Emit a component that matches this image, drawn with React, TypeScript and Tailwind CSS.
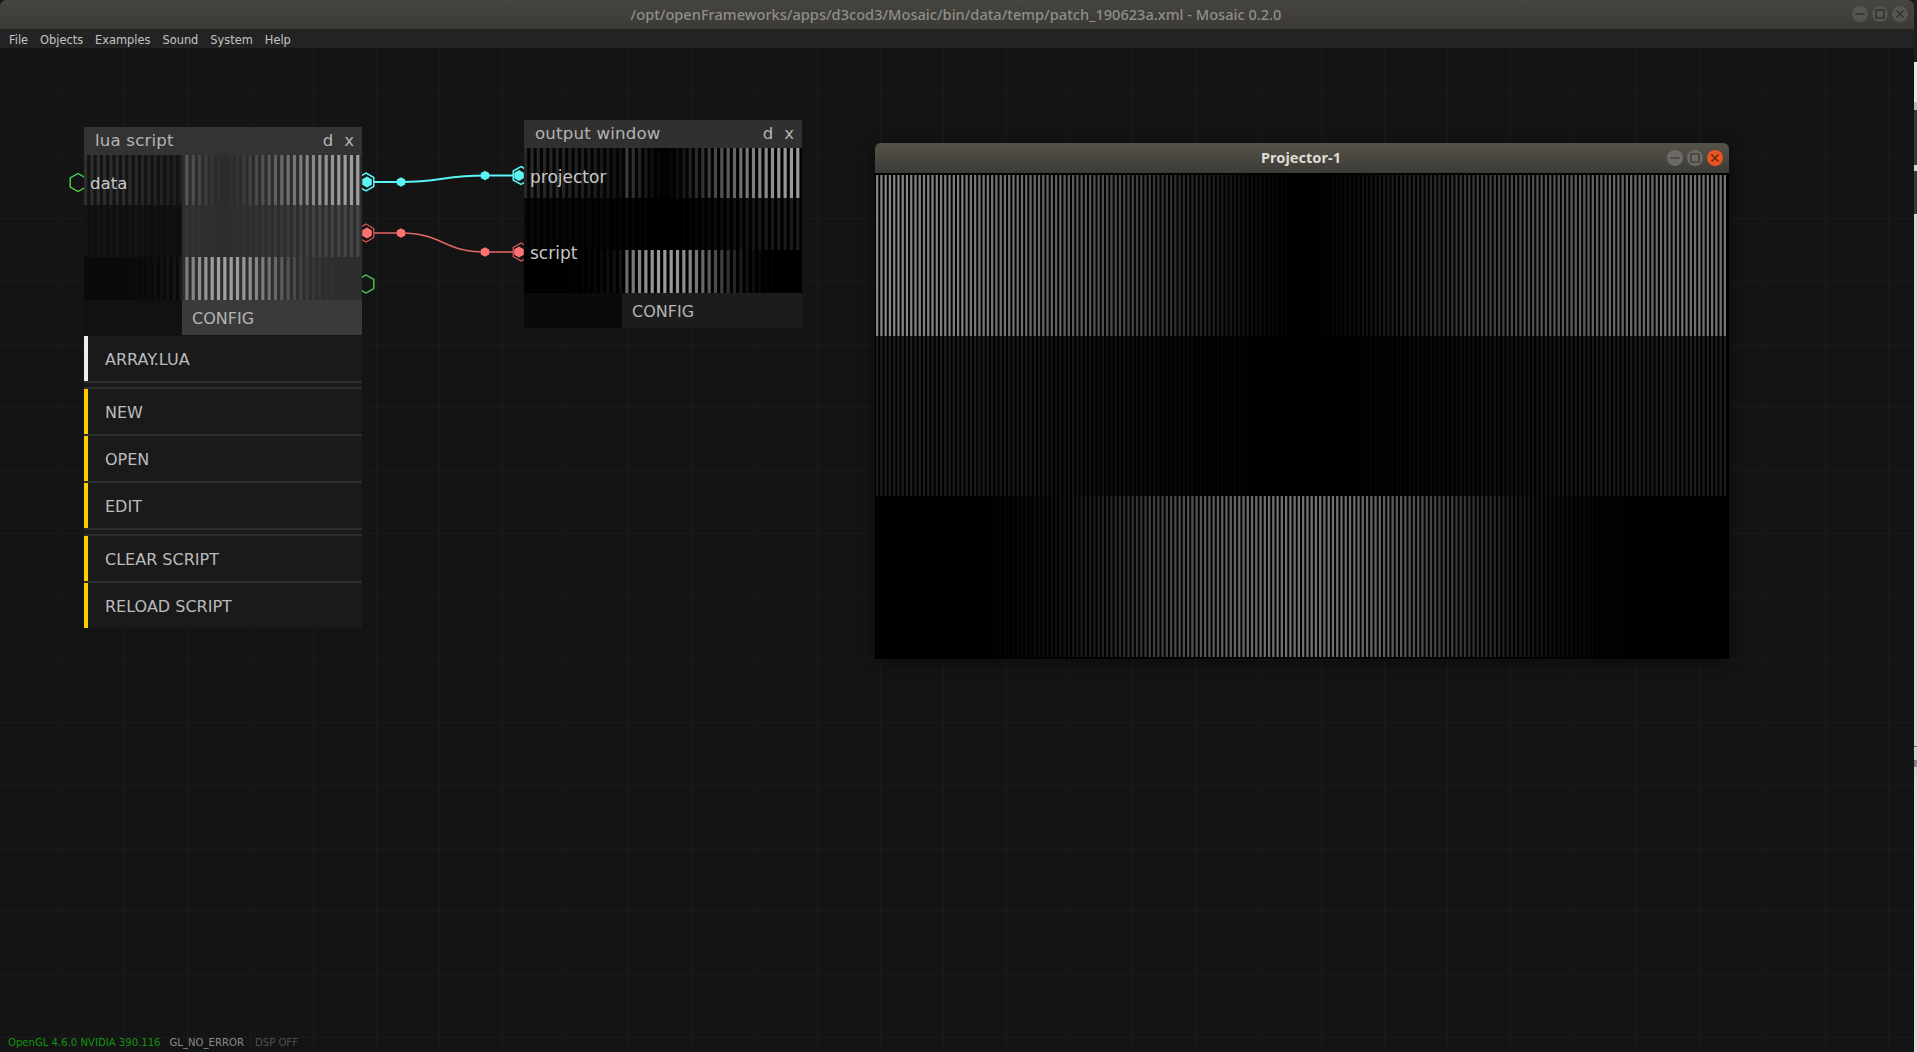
import React from 'react'

const VERDANA = "font-['DejaVu_Sans',sans-serif]"

const clamp = (v: number) => Math.max(0, Math.min(255, Math.round(v)))
const grey = (v: number) => {
  const c = clamp(v)
  return `rgb(${c},${c},${c})`
}

// brightness of the three bands across the width (t = 0..1)
const envelopes = [
  (t: number) => (t < 0.5 ? 0.72 : 0.62) * Math.pow(Math.abs(Math.cos(Math.PI * t)), 1.3),
  (t: number) => 0.22 * Math.pow(Math.abs(Math.cos(Math.PI * t)), 1.5),
  (t: number) => 0.62 * Math.pow(Math.sin(Math.PI * t), 4),
]

type StripesProps = {
  width: number
  rows: number[]
  period: number
  barWidth: number
  split?: number
  bgs?: [number, number][]
  gains?: [number, number]
  rowGains?: number[]
}

function Stripes({ width, rows, period, barWidth, split = 0, bgs, gains = [1, 1], rowGains = [1, 1, 1] }: StripesProps) {
  const total = rows.reduce((a, b) => a + b, 0)
  const rects: React.ReactNode[] = []
  let y = 0
  rows.forEach((h, r) => {
    const [bgL, bgR] = bgs ? bgs[r] : [0, 0]
    if (split > 0) rects.push(<rect key={`l${r}`} x={0} y={y} width={split} height={h} fill={grey(bgL)} />)
    rects.push(<rect key={`r${r}`} x={split} y={y} width={width - split} height={h} fill={grey(bgR)} />)
    for (let i = 0; i * period < width; i++) {
      const x = i * period
      const t = x / width
      const left = x < split
      const bg = left ? bgL : bgR
      const gain = (left ? gains[0] : gains[1]) * rowGains[r]
      const v = bg + (255 - bg) * envelopes[r](t) * gain
      const w = left ? Math.min(barWidth, split - x) : barWidth
      if (v - bg > 1) rects.push(<rect key={`b${r}-${i}`} x={x} y={y} width={w} height={h} fill={grey(v)} />)
    }
    y += h
  })
  return (
    <svg width={width} height={total} viewBox={`0 0 ${width} ${total}`} className="block">
      {rects}
    </svg>
  )
}

const hexPoints = (cx: number, cy: number, r: number) =>
  [0, 1, 2, 3, 4, 5]
    .map((i) => {
      const a = (Math.PI / 3) * i - Math.PI / 2
      return `${cx + r * Math.cos(a)},${cy + r * Math.sin(a)}`
    })
    .join(' ')

function Wires() {
  const cyan = '#5cf4f4'
  const red = '#ff7272'
  return (
    <svg className="absolute left-0 top-0 w-[600px] h-[300px]" viewBox="0 48 600 300">
      <polygon points={hexPoints(78, 182.5, 9)} fill="none" stroke="#4fd24f" strokeWidth="1.4" />
      <polygon points={hexPoints(366, 284, 9)} fill="none" stroke="#4fd24f" strokeWidth="1.4" />

      <path d="M367 182 L401 182 C 440 182, 445 175.5, 485 175.5 L519 175.5" fill="none" stroke={cyan} strokeWidth="2" />
      <polygon points={hexPoints(366, 182, 9)} fill="#141414" stroke={cyan} strokeWidth="1.5" />
      <polygon points={hexPoints(367, 182, 5.5)} fill={cyan} />
      <polygon points={hexPoints(401, 182, 4.8)} fill={cyan} />
      <polygon points={hexPoints(485, 175.5, 4.8)} fill={cyan} />
      <polygon points={hexPoints(521, 175.5, 9)} fill="#141414" stroke={cyan} strokeWidth="1.5" />
      <polygon points={hexPoints(519, 175.5, 5.5)} fill={cyan} />

      <path d="M367 233 L401 233 C 443 233, 443 252, 485 252 L519 252" fill="none" stroke="#e56666" strokeWidth="1.4" />
      <polygon points={hexPoints(366, 233, 9)} fill="#141414" stroke="#d85c5c" strokeWidth="1.2" />
      <polygon points={hexPoints(367, 233, 5.5)} fill={red} />
      <polygon points={hexPoints(401, 233, 4.8)} fill={red} />
      <polygon points={hexPoints(485, 252, 4.8)} fill={red} />
      <polygon points={hexPoints(521, 252, 9)} fill="#141414" stroke="#d85c5c" strokeWidth="1.2" />
      <polygon points={hexPoints(519, 252, 5.5)} fill={red} />
    </svg>
  )
}

function NodeHeader({ title, className }: { title: string; className: string }) {
  return (
    <div className={`h-[28px] flex items-center justify-between pl-[11px] pr-[8px] text-[16.6px] text-[#b4b4b4] ${className}`}>
      <span className="tracking-[0.2px]">{title}</span>
      <span className="flex gap-[11px]">
        <span>d</span>
        <span>x</span>
      </span>
    </div>
  )
}

function PanelRow({ label, bar, last }: { label: string; bar: string; last?: boolean }) {
  return (
    <div className={`flex ${last ? 'h-[45px]' : 'h-[47px] border-b-2 border-[#2d2d2d]'}`}>
      <div className={`w-[4px] ${bar}`} />
      <div className="flex-1 flex items-center pl-[17px] pt-[3px] text-[16px] text-[#bcbcbc]">{label}</div>
    </div>
  )
}

function Gap() {
  return <div className="h-[4px] bg-[#1a1a1a]" />
}

function Sep() {
  return <div className="h-[2px] bg-[#2d2d2d]" />
}

function LuaNode() {
  return (
    <div className={`absolute left-[84px] top-[79px] w-[278px] ${VERDANA}`}>
      <NodeHeader title="lua script" className="bg-[#333333]" />
      <div className="relative">
        <Stripes
          width={278}
          rows={[50, 52, 43]}
          period={6.33}
          barWidth={3.2}
          split={98}
          bgs={[
            [19, 44],
            [15, 46],
            [10, 46],
          ]}
          gains={[0.16, 0.88]}
          rowGains={[1, 0.6, 1]}
        />
        <span className="absolute left-[6px] top-[19px] leading-[20px] text-[16.6px] text-[#c8c8c8]">data</span>
      </div>
      <div className="h-[35px] flex">
        <div className="w-[98px] bg-[#111111]" />
        <div className="flex-1 flex items-center pl-[10px] pt-[2px] bg-[#3a3a3a] text-[16px] text-[#b4b4b4]">CONFIG</div>
      </div>
      <div className="mt-[1px] bg-[#1a1a1a]">
        <PanelRow label="ARRAY.LUA" bar="bg-[#eeeeee]" />
        <Gap />
        <Sep />
        <PanelRow label="NEW" bar="bg-[#ffcc00]" />
        <PanelRow label="OPEN" bar="bg-[#ffcc00]" />
        <PanelRow label="EDIT" bar="bg-[#ffcc00]" />
        <Gap />
        <Sep />
        <PanelRow label="CLEAR SCRIPT" bar="bg-[#ffcc00]" />
        <PanelRow label="RELOAD SCRIPT" bar="bg-[#ffcc00]" last />
      </div>
    </div>
  )
}

function OutputNode() {
  return (
    <div className={`absolute left-[524px] top-[72px] w-[278px] ${VERDANA}`}>
      <NodeHeader title="output window" className="bg-[#303030]" />
      <div className="relative">
        <Stripes
          width={278}
          rows={[50, 52, 43]}
          period={6.33}
          barWidth={3.2}
          split={98}
          bgs={[
            [4, 2],
            [2, 0],
            [0, 0],
          ]}
          gains={[0.2, 0.98]}
          rowGains={[1, 0.5, 1]}
        />
        <span className="absolute left-[6px] top-[19px] leading-[20px] text-[17px] text-[#c8c8c8]">projector</span>
        <span className="absolute left-[6px] top-[95px] leading-[20px] text-[17px] text-[#c8c8c8]">script</span>
      </div>
      <div className="h-[35px] flex">
        <div className="w-[98px] bg-[#0a0a0a]" />
        <div className="flex-1 flex items-center pl-[10px] pt-[2px] bg-[#1c1c1c] text-[16px] text-[#b4b4b4]">CONFIG</div>
      </div>
    </div>
  )
}

function WinButton({ kind, className, stroke }: { kind: 'min' | 'max' | 'close'; className: string; stroke: string }) {
  return (
    <div className={`w-[16px] h-[16px] rounded-full flex items-center justify-center ${className}`}>
      <svg width="12" height="12" viewBox="0 0 12 12" fill="none" stroke={stroke} strokeWidth="1.3">
        {kind === 'min' && <path d="M1.5 6h9" />}
        {kind === 'max' && <rect x="2" y="2" width="8" height="8" />}
        {kind === 'close' && <path d="M2.5 2.5l7 7M9.5 2.5l-7 7" />}
      </svg>
    </div>
  )
}

function ProjectorWindow() {
  return (
    <div className="absolute left-[875px] top-[95px] w-[854px] shadow-[0_2px_14px_rgba(0,0,0,0.5)]">
      <div className="relative h-[30px] rounded-t-[6px] bg-gradient-to-b from-[#565349] to-[#3c3b37] flex items-center justify-center">
        <span className="font-['Noto_Sans',sans-serif] font-bold text-[14.6px] text-[#dfdbd2] pr-[2px]">Projector-1</span>
        <div className="absolute right-[6px] top-[7px] flex gap-[4px]">
          <WinButton kind="min" className="bg-[#6b6a66]" stroke="#3a3936" />
          <WinButton kind="max" className="bg-[#6b6a66]" stroke="#3a3936" />
          <WinButton kind="close" className="bg-[#e95420]" stroke="#5a2410" />
        </div>
      </div>
      <div className="bg-black pl-[1px] pr-[2px] pt-[2px] pb-[2px]">
        <Stripes width={851} rows={[161, 160, 161]} period={4.26} barWidth={2.3} gains={[0.72, 0.72]} rowGains={[1, 0.7, 1]} />
      </div>
    </div>
  )
}

const menuItems = ['File', 'Objects', 'Examples', 'Sound', 'System', 'Help']

const edgeStrip = [
  { h: 'h-[62px]', c: 'bg-[#1e1e1e]' },
  { h: 'h-[40px]', c: 'bg-[#e8e8e8]' },
  { h: 'h-[8px]', c: 'bg-[#bbbbbb]' },
  { h: 'h-[55px]', c: 'bg-[#3a3a3a]' },
  { h: 'h-[6px]', c: 'bg-[#d4d4d4]' },
  { h: 'h-[43px]', c: 'bg-[#3a3a3a]' },
  { h: 'h-[532px]', c: 'bg-[#d4d4d4]' },
  { h: 'h-[1px]', c: 'bg-[#666666]' },
  { h: 'h-[13px]', c: 'bg-[#d4d4d4]' },
  { h: 'h-[7px]', c: 'bg-gradient-to-r from-[#8a6a50] to-[#7fa0c8]' },
  { h: 'h-[10px]', c: 'bg-[#d4d4d4]' },
  { h: 'flex-1', c: 'bg-[#dadada]' },
]

export default function App() {
  return (
    <div className="w-[1917px] h-[1052px] flex overflow-hidden bg-[#141414]">
      <div className="flex-1 flex flex-col min-w-0">
        <div className="h-[29px] flex items-center justify-between rounded-t-[6px] bg-gradient-to-b from-[#464540] to-[#3b3a36] relative">
          <span className="flex-1 text-center pr-[2px] font-['Noto_Sans',sans-serif] font-medium text-[14.6px] text-[#8f8e87]">
            /opt/openFrameworks/apps/d3cod3/Mosaic/bin/data/temp/patch_190623a.xml - Mosaic 0.2.0
          </span>
          <div className="absolute right-[6px] top-[6px] flex gap-[4px]">
            <WinButton kind="min" className="bg-[#56554f]" stroke="#2e2d29" />
            <WinButton kind="max" className="bg-[#56554f]" stroke="#2e2d29" />
            <WinButton kind="close" className="bg-[#56554f]" stroke="#2e2d29" />
          </div>
        </div>
        <div className={`h-[19px] flex items-center gap-[12px] pl-[9px] pt-[4px] bg-[#232323] text-[11.4px] text-[#c4c4c4] ${VERDANA}`}>
          {menuItems.map((m) => (
            <span key={m}>{m}</span>
          ))}
        </div>
        <div className="flex-1 flex flex-col bg-[#141414] bg-[linear-gradient(to_right,#1a1a1a_1px,transparent_1px),linear-gradient(to_bottom,#1a1a1a_1px,transparent_1px)] bg-[size:63px_63px] bg-[position:61px_44px]">
          <div className="flex-1 relative">
            <Wires />
            <LuaNode />
            <OutputNode />
            <ProjectorWindow />
          </div>
          <div className={`h-[20px] pt-[2px] flex items-center pl-[8px] text-[10.1px] ${VERDANA}`}>
            <span className="text-[#129412]">OpenGL 4.6.0 NVIDIA 390.116</span>
            <span className="ml-[9px] text-[#8a8a8a]">GL_NO_ERROR</span>
            <span className="ml-[11px] text-[#505050]">DSP OFF</span>
          </div>
        </div>
      </div>
      <div className="w-[3px] flex flex-col">
        {edgeStrip.map((s, i) => (
          <div key={i} className={`${s.h} ${s.c}`} />
        ))}
      </div>
    </div>
  )
}
